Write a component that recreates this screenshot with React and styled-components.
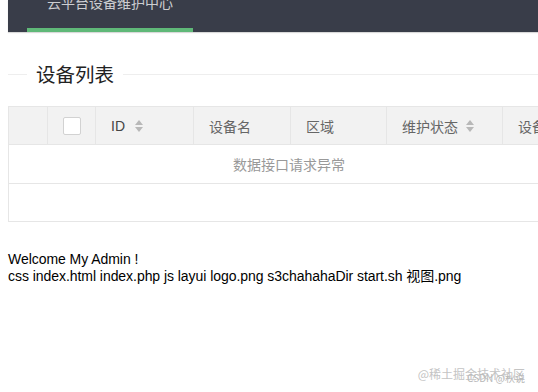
import React from "react";
import styled, { createGlobalStyle } from "styled-components";

const Global = createGlobalStyle`
  html, body { margin: 0; padding: 0; overflow: hidden; background: #fff; }
  body { font-family: "Liberation Sans", "Noto Sans CJK SC", Arial, sans-serif; }
`;

const Page = styled.div`
  position: relative;
  width: 538px;
  height: 392px;
  padding-left: 8px;
  box-sizing: border-box;
  overflow: hidden;
`;

const Header = styled.div`
  height: 32px;
  background: #393d49;
  display: flex;
  box-shadow: 0 1px 1px rgba(0, 0, 0, 0.15);
`;

const NavItem = styled.div`
  margin-left: 19px;
  padding: 0 20px;
  height: 32px;
  box-sizing: border-box;
  border-bottom: 4px solid #5fb878;
  overflow: hidden;
`;

const NavText = styled.div`
  margin-top: -28px;
  line-height: 60px;
  font-size: 14px;
  color: rgba(255, 255, 255, 0.75);
  font-family: "Noto Sans CJK SC", sans-serif;
  white-space: nowrap;
`;

const TitleRow = styled.div`
  margin-top: 28px;
  display: flex;
  align-items: center;
  height: 28px;
  &::before,
  &::after {
    content: "";
    height: 1px;
    background: #eee;
  }
  &::before { width: 19px; }
  &::after { flex: 1; }
`;

const Legend = styled.div`
  padding: 0 9px;
  font-size: 19.5px;
  line-height: 28px;
  color: #222;
  font-family: "Noto Sans CJK SC", sans-serif;
  font-weight: 400;
`;

const TableBox = styled.div`
  margin-top: 18px;
  width: 560px;
  border: 1px solid #e6e6e6;
`;

const HeadRow = styled.div`
  display: grid;
  grid-template-columns: 39px 48px 98px 97px 96px 116px 1fr;
  height: 37px;
  background: #f2f2f2;
  border-bottom: 1px solid #e6e6e6;
`;

const Th = styled.div`
  box-sizing: border-box;
  border-right: ${(p) => (p.$last ? "none" : "1px solid #e6e6e6")};
  display: flex;
  align-items: center;
  justify-content: ${(p) => (p.$center ? "center" : "flex-start")};
  padding: ${(p) => (p.$center ? "0" : "0 15px")};
  font-size: 14px;
  color: ${(p) => (p.$latin ? "#444" : "#666")};
  white-space: nowrap;
  overflow: hidden;
  font-family: ${(p) =>
    p.$latin ? '"Liberation Sans", Arial, sans-serif' : '"Noto Sans CJK SC", sans-serif'};
`;

const Checkbox = styled.span`
  width: 16px;
  height: 16px;
  border: 1px solid #d2d2d2;
  border-radius: 2px;
  background: #fff;
  margin-top: 1px;
`;

const Sort = styled.span`
  display: inline-flex;
  flex-direction: column;
  gap: 2px;
  margin-left: ${(p) => p.$gap}px;
  &::before,
  &::after {
    content: "";
    width: 0;
    height: 0;
    border-left: 4.5px solid transparent;
    border-right: 4.5px solid transparent;
  }
  &::before { border-bottom: 5px solid #b8b8b8; }
  &::after { border-top: 5px solid #b8b8b8; }
`;

const NoneRow = styled.div`
  height: 38px;
  border-bottom: 1px solid #e6e6e6;
  display: flex;
  align-items: center;
  justify-content: center;
  font-size: 14px;
  color: #999;
  font-family: "Noto Sans CJK SC", sans-serif;
`;

const EmptyRow = styled.div`
  height: 37px;
`;

const Welcome = styled.div`
  margin-top: 29px;
  font-size: 14px;
  line-height: 17px;
  color: #000;
  letter-spacing: -0.05px;
  font-family: "Liberation Sans", "Noto Sans CJK SC", Arial, sans-serif;
`;

const Mark = styled.div`
  position: absolute;
  right: ${(p) => p.$r}px;
  bottom: ${(p) => p.$b}px;
  font-size: ${(p) => p.$s}px;
  color: ${(p) => p.$c};
  font-family: "Noto Sans CJK SC", sans-serif;
  white-space: nowrap;
`;

export default function App() {
  return (
    <Page>
      <Global />
      <Header>
        <NavItem>
          <NavText>云平台设备维护中心</NavText>
        </NavItem>
      </Header>
      <TitleRow>
        <Legend>设备列表</Legend>
      </TitleRow>
      <TableBox>
        <HeadRow>
          <Th $center />
          <Th $center>
            <Checkbox />
          </Th>
          <Th $latin>
            ID<Sort $gap={10} />
          </Th>
          <Th>设备名</Th>
          <Th>区域</Th>
          <Th>
            维护状态<Sort $gap={8} />
          </Th>
          <Th $last>设备状态</Th>
        </HeadRow>
        <NoneRow>数据接口请求异常</NoneRow>
        <EmptyRow />
      </TableBox>
      <Welcome>
        Welcome My Admin !
        <br />
        css index.html index.php js layui logo.png s3chahahaDir start.sh 视图.png
      </Welcome>
      <Mark $r={13} $b={10} $s={12} $c="#c4c4c4">@稀土掘金技术社区</Mark>
      <Mark $r={13} $b={7} $s={10} $c="#b8b8b8">CSDN @秋说</Mark>
    </Page>
  );
}
